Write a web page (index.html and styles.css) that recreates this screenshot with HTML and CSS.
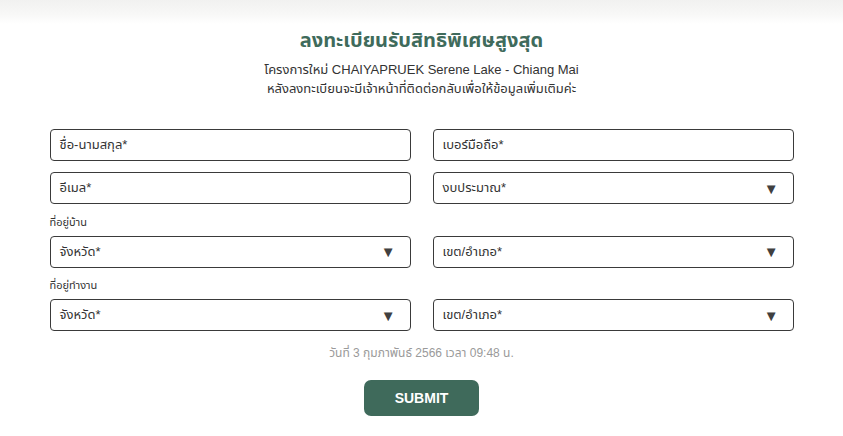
FILE: index.html
```html
<!DOCTYPE html>
<html lang="th">
<head>
<meta charset="utf-8">
<link rel="stylesheet" href="styles.css">
</head>
<body>
<div class="topshade"></div>
<main class="page">
  <h1 class="title">ลงทะเบียนรับสิทธิพิเศษสูงสุด</h1>
  <p class="sub">โครงการใหม่ CHAIYAPRUEK Serene Lake - Chiang Mai</p>
  <p class="sub">หลังลงทะเบียนจะมีเจ้าหน้าที่ติดต่อกลับเพื่อให้ข้อมูลเพิ่มเติมค่ะ</p>

  <form class="form">
    <div class="grid">
      <div class="field">ชื่อ-นามสกุล*</div>
      <div class="field">เบอร์มือถือ*</div>
      <div class="field">อีเมล*</div>
      <div class="field select"><span>งบประมาณ*</span><span class="arrow">▼</span></div>
    </div>
    <div class="label">ที่อยู่บ้าน</div>
    <div class="grid">
      <div class="field select"><span>จังหวัด*</span><span class="arrow">▼</span></div>
      <div class="field select"><span>เขต/อำเภอ*</span><span class="arrow">▼</span></div>
    </div>
    <div class="label">ที่อยู่ทำงาน</div>
    <div class="grid">
      <div class="field select"><span>จังหวัด*</span><span class="arrow">▼</span></div>
      <div class="field select"><span>เขต/อำเภอ*</span><span class="arrow">▼</span></div>
    </div>
    <p class="date">วันที่ 3 กุมภาพันธ์ 2566 เวลา 09:48 น.</p>
    <div class="actions"><button type="button" class="submit">SUBMIT</button></div>
  </form>
</main>
</body>
</html>
```
FILE: styles.css
```css
html, body {
  margin: 0;
  padding: 0;
  background: #ffffff;
}
body {
  font-family: "Liberation Sans", "Noto Sans", "Noto Sans Thai", sans-serif;
  color: #333333;
  width: 843px;
  height: 436px;
  overflow: hidden;
  position: relative;
}
.topshade {
  position: absolute;
  left: 0;
  top: 0;
  width: 100%;
  height: 24px;
  background: linear-gradient(to bottom, #f1f1f0 0%, #f8f8f7 60%, #ffffff 100%);
}
.page {
  position: relative;
  padding-top: 27px;
}
.title {
  margin: 0 0 7px;
  text-align: center;
  font-size: 20px;
  line-height: 26px;
  font-weight: bold;
  color: #3f6b5c;
}
.sub {
  margin: 0;
  text-align: center;
  font-size: 13px;
  line-height: 19px;
  color: #333333;
}
.form {
  width: 744px;
  margin: 31px auto 0;
}
.grid {
  display: grid;
  grid-template-columns: 361px 361px;
  column-gap: 22px;
  row-gap: 11px;
}
.field {
  box-sizing: border-box;
  height: 32px;
  border: 1px solid #3a3a3a;
  border-radius: 4px;
  padding: 0 14px 0 9px;
  font-size: 13px;
  color: #333333;
  display: flex;
  align-items: center;
}
.select {
  justify-content: space-between;
}
.arrow {
  font-size: 15px;
  color: #404040;
}
.label {
  font-size: 11px;
  line-height: 14px;
  color: #333333;
  padding: 10.5px 0 7px;
}
.date {
  margin: 14px 0 0;
  text-align: center;
  font-size: 12px;
  line-height: 16px;
  color: #9a9a9a;
}
.actions {
  display: flex;
  justify-content: center;
  margin-top: 19px;
}
.submit {
  width: 115px;
  height: 36px;
  border: none;
  border-radius: 7px;
  background: #3f6a5b;
  color: #ffffff;
  font-family: "Liberation Sans", sans-serif;
  font-weight: bold;
  font-size: 14px;
  cursor: pointer;
}
```
